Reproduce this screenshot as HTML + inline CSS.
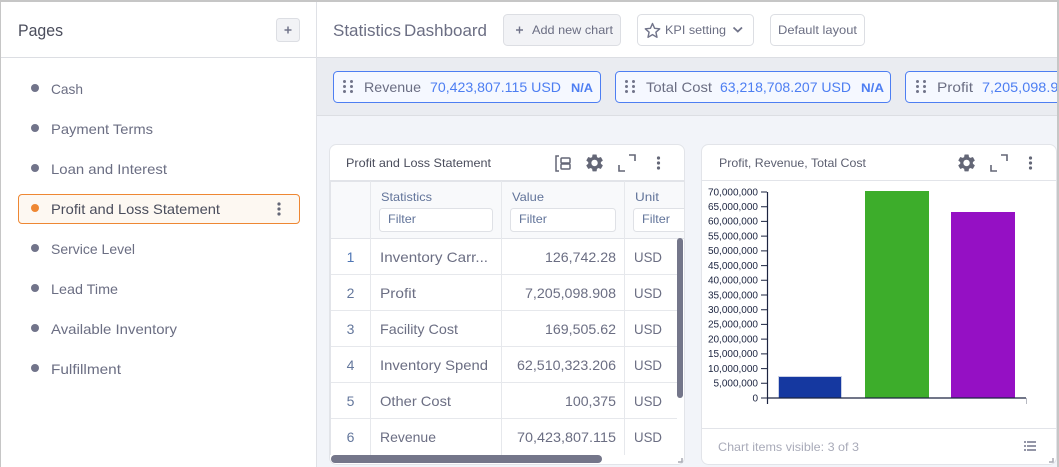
<!DOCTYPE html>
<html><head><meta charset="utf-8"><style>
html,body{margin:0;padding:0;background:#fff;width:1059px;height:467px;overflow:hidden}
svg{display:block}
text{font-family:"Liberation Sans",sans-serif;font-size:14px;fill:#6b6e83}
.s{font-size:12px}
.d{fill:#4a4d5c}
.b{fill:#4d7ef2}
.h{font-size:12px;fill:#62749a}
.a{font-size:10px;fill:#1c2440;text-anchor:end}
</style></head><body>
<svg width="1059" height="467" viewBox="0 0 1059 467" xmlns="http://www.w3.org/2000/svg">
<defs>
<path id="gear" d="M19.14 12.94c.04-.3.06-.61.06-.94 0-.32-.02-.64-.07-.94l2.03-1.58c.18-.14.23-.41.12-.61l-1.92-3.32c-.12-.22-.37-.29-.59-.22l-2.39.96c-.5-.38-1.03-.7-1.62-.94l-.36-2.54c-.04-.24-.24-.41-.48-.41h-3.84c-.24 0-.43.17-.47.41l-.36 2.54c-.59.24-1.13.57-1.62.94l-2.39-.96c-.22-.08-.47 0-.59.22L2.74 8.87c-.12.21-.08.47.12.61l2.03 1.58c-.05.3-.09.63-.09.94s.02.64.07.94l-2.03 1.58c-.18.14-.23.41-.12.61l1.92 3.32c.12.22.37.29.59.22l2.39-.96c.5.38 1.03.7 1.62.94l.36 2.54c.05.24.24.41.48.41h3.84c.24 0 .44-.17.47-.41l.36-2.54c.59-.24 1.13-.56 1.62-.94l2.39.96c.22.08.47 0 .59-.22l1.92-3.32c.12-.22.07-.47-.12-.61l-2.01-1.58zM12 15.6c-1.98 0-3.6-1.62-3.6-3.6s1.62-3.6 3.6-3.6 3.6 1.62 3.6 3.6-1.62 3.6-3.6 3.6z" fill="#646777"/>
<g id="grip" fill="#71748a"><circle cx="1.5" cy="1.5" r="1.5"/><circle cx="8.5" cy="1.5" r="1.5"/><circle cx="1.5" cy="6.5" r="1.5"/><circle cx="8.5" cy="6.5" r="1.5"/><circle cx="1.5" cy="11.5" r="1.5"/><circle cx="8.5" cy="11.5" r="1.5"/></g>
<g id="dots" fill="#646777"><circle cx="0" cy="-5" r="1.6"/><circle cx="0" cy="0" r="1.6"/><circle cx="0" cy="5" r="1.6"/></g>
<path id="exp" d="M0 10V16H6M10 0H16V6" fill="none" stroke="#646777" stroke-width="1.6"/>
<clipPath id="kc"><rect x="318" y="60" width="739" height="50"/></clipPath>
<clipPath id="tc"><rect x="331" y="181" width="353" height="274"/></clipPath>
</defs>

<!-- backgrounds -->
<rect width="1059" height="467" fill="#fff"/>
<rect x="317" y="58" width="740" height="409" fill="#f2f4f9"/>
<rect x="317" y="58" width="740" height="57" fill="#eaecf1"/>
<rect x="317" y="115" width="740" height="1" fill="#dcdee3"/>
<rect x="1" y="57" width="316" height="1" fill="#dcdee3"/>
<rect x="317" y="57" width="740" height="1" fill="#dcdee3"/>
<rect x="316" y="2" width="1" height="465" fill="#dfe1e6"/>
<rect x="0" y="0" width="1059" height="2" fill="#c6c6c6"/>
<rect x="0" y="0" width="1" height="467" fill="#c6c6c6"/>
<rect x="1057" y="0" width="2" height="467" fill="#c6c6c6"/>

<!-- sidebar -->
<text x="18" y="36" style="font-size:17px;fill:#4a4d5c" textLength="45" lengthAdjust="spacingAndGlyphs">Pages</text>
<rect x="276.500" y="18.500" width="23" height="23" rx="3" fill="#f2f3f6" stroke="#dcdee3"/>
<path d="M284.500 30H291.500M288 26.500V33.500" stroke="#71748a" stroke-width="1.500"/>
<g fill="#71748a"><circle cx="35" cy="88" r="4"/><circle cx="35" cy="128" r="4"/><circle cx="35" cy="168" r="4"/><circle cx="35" cy="248" r="4"/><circle cx="35" cy="288" r="4"/><circle cx="35" cy="328" r="4"/><circle cx="35" cy="368" r="4"/></g>
<text x="51" y="94" textLength="32" lengthAdjust="spacingAndGlyphs">Cash</text>
<text x="51" y="134" textLength="102" lengthAdjust="spacingAndGlyphs">Payment Terms</text>
<text x="51" y="174" textLength="116" lengthAdjust="spacingAndGlyphs">Loan and Interest</text>
<rect x="18.500" y="194.500" width="281" height="29" rx="3.500" fill="#fdf8f2" stroke="#ee8733"/>
<circle cx="35" cy="208" r="4" fill="#ee8733"/>
<text x="51" y="214" class="d" textLength="169" lengthAdjust="spacingAndGlyphs">Profit and Loss Statement</text>
<use href="#dots" x="279" y="209"/>
<text x="51" y="254" textLength="84" lengthAdjust="spacingAndGlyphs">Service Level</text>
<text x="51" y="294" textLength="67" lengthAdjust="spacingAndGlyphs">Lead Time</text>
<text x="51" y="334" textLength="126" lengthAdjust="spacingAndGlyphs">Available Inventory</text>
<text x="51" y="374" textLength="70" lengthAdjust="spacingAndGlyphs">Fulfillment</text>

<!-- top bar -->
<text x="333" y="36" style="font-size:17px" textLength="68" lengthAdjust="spacingAndGlyphs">Statistics</text>
<text x="404" y="36" style="font-size:17px" textLength="83" lengthAdjust="spacingAndGlyphs">Dashboard</text>
<rect x="503.500" y="14.500" width="117" height="31" rx="4" fill="#f2f3f6" stroke="#dcdee3"/>
<path d="M516 30H523M519.500 26.500V33.500" stroke="#71748a" stroke-width="1.400"/>
<text x="532" y="34" class="s" textLength="81" lengthAdjust="spacingAndGlyphs">Add new chart</text>
<rect x="637.500" y="14.500" width="116" height="31" rx="4" fill="#fff" stroke="#dcdee3"/>
<path d="M652.500 23.500L654.600 28.300L659.700 28.800L655.900 32.200L657 37.300L652.500 34.600L648 37.300L649.100 32.200L645.300 28.800L650.400 28.300Z" fill="none" stroke="#71748a" stroke-width="1.400" stroke-linejoin="round"/>
<text x="665" y="34" class="s" textLength="61" lengthAdjust="spacingAndGlyphs">KPI setting</text>
<path d="M733.500 27.500L737.800 31.500L742 27.500" fill="none" stroke="#71748a" stroke-width="1.800"/>
<rect x="770.500" y="14.500" width="94" height="31" rx="4" fill="#fff" stroke="#dcdee3"/>
<text x="778" y="34" class="s" textLength="79" lengthAdjust="spacingAndGlyphs">Default layout</text>

<!-- KPI strip -->
<g clip-path="url(#kc)">
<rect x="333.500" y="71.500" width="267" height="31" rx="4" fill="#f5f8ff" stroke="#4d7ef2"/>
<use href="#grip" x="343" y="80"/>
<text x="364" y="92" textLength="57" lengthAdjust="spacingAndGlyphs">Revenue</text>
<text x="430" y="92" class="b" textLength="131" lengthAdjust="spacingAndGlyphs">70,423,807.115 USD</text>
<text x="571" y="92" class="b" style="font-size:12px;font-weight:700" textLength="22" lengthAdjust="spacingAndGlyphs">N/A</text>
<rect x="615.500" y="71.500" width="275" height="31" rx="4" fill="#f5f8ff" stroke="#4d7ef2"/>
<use href="#grip" x="625" y="80"/>
<text x="646" y="92" textLength="66" lengthAdjust="spacingAndGlyphs">Total Cost</text>
<text x="720" y="92" class="b" textLength="131" lengthAdjust="spacingAndGlyphs">63,218,708.207 USD</text>
<text x="861" y="92" class="b" style="font-size:12px;font-weight:700" textLength="23" lengthAdjust="spacingAndGlyphs">N/A</text>
<rect x="905.500" y="71.500" width="260" height="31" rx="4" fill="#f5f8ff" stroke="#4d7ef2"/>
<use href="#grip" x="916" y="80"/>
<text x="937" y="92" textLength="36" lengthAdjust="spacingAndGlyphs">Profit</text>
<text x="982" y="92" class="b" textLength="127" lengthAdjust="spacingAndGlyphs">7,205,098.908 USD</text>
</g>

<!-- table card -->
<rect x="329.500" y="144.500" width="355" height="320" rx="7" fill="#fff" stroke="#e2e4e9"/>
<text x="346" y="167" class="s d" textLength="145" lengthAdjust="spacingAndGlyphs">Profit and Loss Statement</text>
<g fill="none" stroke="#646777" stroke-width="1.500"><path d="M559 156H556V171H559"/><rect x="561" y="158" width="9" height="5" rx="1"/><rect x="561" y="164" width="9" height="5" rx="1"/></g>
<use href="#gear" transform="translate(584 152.400) scale(.88)"/>
<use href="#exp" x="619" y="155"/>
<use href="#dots" x="658.500" y="163"/>
<g clip-path="url(#tc)">
<rect x="331" y="181" width="353" height="57" fill="#f8f9fb"/>
</g>
<rect x="330" y="180" width="355" height="2" fill="#e2e4e9"/>
<rect x="331" y="238" width="353" height="1" fill="#e2e4e9"/>
<rect x="330" y="181" width="1" height="274" fill="#e2e4e9"/>
<g fill="#e6e8ec">
<rect x="331" y="274" width="346" height="1"/><rect x="331" y="310" width="346" height="1"/><rect x="331" y="346" width="346" height="1"/><rect x="331" y="382" width="346" height="1"/><rect x="331" y="418" width="346" height="1"/>
<rect x="370" y="181" width="1" height="274"/><rect x="501" y="181" width="1" height="274"/><rect x="624" y="181" width="1" height="274"/>
</g>
<text x="381" y="201" class="h" textLength="51" lengthAdjust="spacingAndGlyphs">Statistics</text>
<text x="512" y="201" class="h" textLength="32" lengthAdjust="spacingAndGlyphs">Value</text>
<text x="635" y="201" class="h" textLength="24" lengthAdjust="spacingAndGlyphs">Unit</text>
<rect x="379.500" y="208.500" width="113" height="23" rx="3" fill="#fff" stroke="#dfe1e6"/>
<rect x="510.500" y="208.500" width="105" height="23" rx="3" fill="#fff" stroke="#dfe1e6"/>
<g clip-path="url(#tc)"><rect x="633.500" y="208.500" width="60" height="23" rx="3" fill="#fff" stroke="#dfe1e6"/></g>
<text x="388" y="223" class="h" textLength="28" lengthAdjust="spacingAndGlyphs">Filter</text>
<text x="519" y="223" class="h" textLength="28" lengthAdjust="spacingAndGlyphs">Filter</text>
<text x="642" y="223" class="h" textLength="28" lengthAdjust="spacingAndGlyphs">Filter</text>

<text x="350.500" y="262" style="fill:#4f76b5;text-anchor:middle">1</text>
<text x="350.500" y="298" style="fill:#64779c;text-anchor:middle">2</text>
<text x="350.500" y="334" style="fill:#64779c;text-anchor:middle">3</text>
<text x="350.500" y="370" style="fill:#64779c;text-anchor:middle">4</text>
<text x="350.500" y="406" style="fill:#64779c;text-anchor:middle">5</text>
<text x="350.500" y="442" style="fill:#64779c;text-anchor:middle">6</text>
<text x="380" y="262" textLength="108" lengthAdjust="spacingAndGlyphs">Inventory Carr...</text>
<text x="380" y="298" textLength="36" lengthAdjust="spacingAndGlyphs">Profit</text>
<text x="380" y="334" textLength="78" lengthAdjust="spacingAndGlyphs">Facility Cost</text>
<text x="380" y="370" textLength="108" lengthAdjust="spacingAndGlyphs">Inventory Spend</text>
<text x="380" y="406" textLength="71" lengthAdjust="spacingAndGlyphs">Other Cost</text>
<text x="380" y="442" textLength="56" lengthAdjust="spacingAndGlyphs">Revenue</text>
<text x="545" y="262" textLength="71" lengthAdjust="spacingAndGlyphs">126,742.28</text>
<text x="525" y="298" textLength="91" lengthAdjust="spacingAndGlyphs">7,205,098.908</text>
<text x="545" y="334" textLength="71" lengthAdjust="spacingAndGlyphs">169,505.62</text>
<text x="517" y="370" textLength="99" lengthAdjust="spacingAndGlyphs">62,510,323.206</text>
<text x="565" y="406" textLength="51" lengthAdjust="spacingAndGlyphs">100,375</text>
<text x="517" y="442" textLength="99" lengthAdjust="spacingAndGlyphs">70,423,807.115</text>
<text x="634" y="262" textLength="28" lengthAdjust="spacingAndGlyphs">USD</text>
<text x="634" y="298" textLength="28" lengthAdjust="spacingAndGlyphs">USD</text>
<text x="634" y="334" textLength="28" lengthAdjust="spacingAndGlyphs">USD</text>
<text x="634" y="370" textLength="28" lengthAdjust="spacingAndGlyphs">USD</text>
<text x="634" y="406" textLength="28" lengthAdjust="spacingAndGlyphs">USD</text>
<text x="634" y="442" textLength="28" lengthAdjust="spacingAndGlyphs">USD</text>
<rect x="677" y="238" width="6" height="160" rx="3" fill="#74768a"/>
<rect x="331" y="455" width="271" height="8" rx="4" fill="#74768a"/>
<path d="M682 458V462H678" fill="none" stroke="#a8aab4" stroke-width="1.500"/>

<!-- chart card -->
<rect x="701.500" y="144.500" width="355" height="320" rx="7" fill="#fff" stroke="#e2e4e9"/>
<text x="719" y="167" class="s d" style="fill:#5c5f70" textLength="147" lengthAdjust="spacingAndGlyphs">Profit, Revenue, Total Cost</text>
<use href="#gear" transform="translate(956 152.400) scale(.88)"/>
<use href="#exp" x="991" y="155"/>
<use href="#dots" x="1030.500" y="163"/>
<rect x="702" y="180" width="354" height="1" fill="#e2e4e9"/>
<rect x="702" y="428" width="354" height="1" fill="#e2e4e9"/>
<text x="718" y="451" class="s" style="fill:#a9abb9" textLength="141" lengthAdjust="spacingAndGlyphs">Chart items visible: 3 of 3</text>
<path d="M1024 442H1026M1027 442H1036M1024 446H1026M1027 446H1036M1024 450H1026M1027 450H1036" stroke="#71748a" stroke-width="1.500"/>
<path d="M1053 458V462H1049" fill="none" stroke="#a8aab4" stroke-width="1.500"/>

<!-- chart -->
<rect x="778.500" y="376.500" width="63" height="21.500" fill="#1538a0" stroke="#c9d0e6"/>
<rect x="865" y="191" width="64" height="207" fill="#3dad2b"/>
<rect x="951" y="212" width="64" height="186" fill="#9510c4"/>
<path d="M767.500 192V404M767 398H1026" fill="none" stroke="#1c2440" stroke-width="1.200"/>
<path d="M1026.500 398V404" stroke="#b8bac2"/>
<path d="M761 192H767M761 206.700H767M761 221.400H767M761 236.100H767M761 250.900H767M761 265.600H767M761 280.300H767M761 295H767M761 309.700H767M761 324.400H767M761 339.100H767M761 353.900H767M761 368.600H767M761 383.300H767M761 398H767" stroke="#1c2440" stroke-width="1"/>
<text x="758" y="195.500" class="a">70,000,000</text>
<text x="758" y="210" class="a">65,000,000</text>
<text x="758" y="224.700" class="a">60,000,000</text>
<text x="758" y="239.400" class="a">55,000,000</text>
<text x="758" y="254.200" class="a">50,000,000</text>
<text x="758" y="268.900" class="a">45,000,000</text>
<text x="758" y="283.600" class="a">40,000,000</text>
<text x="758" y="298.300" class="a">35,000,000</text>
<text x="758" y="313" class="a">30,000,000</text>
<text x="758" y="327.700" class="a">25,000,000</text>
<text x="758" y="342.400" class="a">20,000,000</text>
<text x="758" y="357.200" class="a">15,000,000</text>
<text x="758" y="371.900" class="a">10,000,000</text>
<text x="758" y="386.600" class="a">5,000,000</text>
<text x="758" y="401.300" class="a">0</text>
</svg>
</body></html>
